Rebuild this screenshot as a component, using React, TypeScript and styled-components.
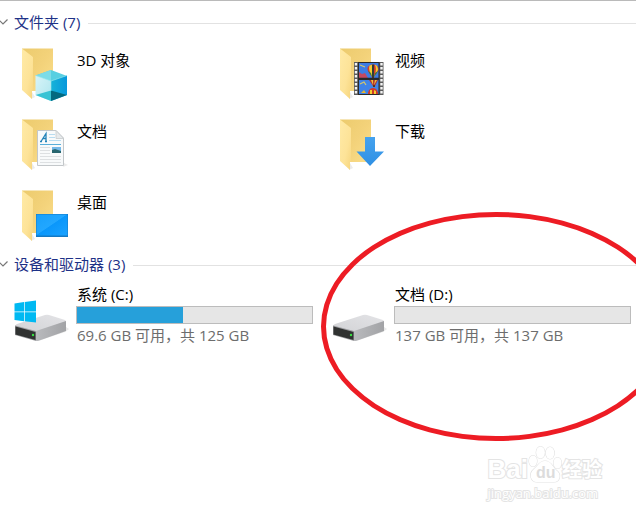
import React, { useState } from "react";
import styled, { createGlobalStyle } from "styled-components";

const GlobalStyle = createGlobalStyle`
  * { box-sizing: border-box; }
  body {
    margin: 0;
    background: #fff;
    font-family: "Open Sans", "Noto Sans CJK SC", sans-serif;
    font-size: 15px;
    line-height: 20px;
    color: #000;
  }
`;

const Page = styled.main`
  display: flex;
  flex-direction: column;
  min-height: 100vh;
  overflow: hidden;
  border-top: 1px solid #bababa;
  padding-top: 11px;
`;

const Group = styled.section`
  margin-bottom: 11px;
`;

const GroupHeader = styled.h2`
  display: flex;
  align-items: center;
  gap: 8px;
  margin: 0;
  font-size: 15px;
  font-weight: 400;

  &::after {
    content: "";
    flex: 1;
    height: 1px;
    background: #e2e2e2;
  }
`;

const Toggle = styled.button`
  display: flex;
  align-items: center;
  gap: 6px;
  padding: 0 0 2px;
  border: 0;
  background: none;
  color: #1e3287;
  font: inherit;
  line-height: 20px;
  cursor: pointer;
`;

const Chevron = styled.svg<{ $open: boolean }>`
  width: 8px;
  height: 8px;
  overflow: visible;
  transform: rotate(${(p) => (p.$open ? 0 : -90)}deg);
`;

const Tiles = styled.ul<{ $offset: number }>`
  display: grid;
  grid-template-columns: 1fr 1fr;
  gap: 17px 19px;
  margin: 0;
  padding: ${(p) => p.$offset}px 5px 0 14px;
  list-style: none;
`;

const Tile = styled.li<{ $drive?: boolean }>`
  position: relative;
  display: flex;
  align-items: ${(p) => (p.$drive ? "flex-end" : "flex-start")};
  gap: 8px;
`;

const Icon = styled.svg`
  flex: none;
  width: 54px;
  height: 54px;
  overflow: visible;
`;

const Name = styled.div<{ $inset?: boolean }>`
  padding: ${(p) => (p.$inset ? "3px 0 0 1px" : "0 0 0 1px")};
`;

const Details = styled.div`
  flex: 1;
  min-width: 0;
`;

const Capacity = styled.div`
  height: 18px;
  margin: 2px 0 1px;
  border: 1px solid #bcbcbc;
  background: #e6e6e6;
`;

const Used = styled.div`
  height: 100%;
  background: #26a0da;
`;

const Space = styled.div`
  padding: 0 0 1px 1px;
  color: #6d6d6d;
  white-space: nowrap;
`;

const Ring = styled.div`
  position: absolute;
  z-index: 1;
  left: -11px;
  top: -72px;
  width: 350px;
  height: 229px;
  border: 5px solid #ed1c24;
  border-radius: 50%;
  pointer-events: none;
`;

const Watermark = styled.footer`
  align-self: flex-end;
  margin-top: auto;
  padding: 0 34px 12px 0;
  color: #fff;
  -webkit-text-stroke: 2px #e4e4e4;
  paint-order: stroke fill;
`;

const Brand = styled.div`
  display: flex;
  align-items: flex-end;
  height: 38px;
  font: 700 26px/30px "Liberation Sans", "Noto Sans CJK SC", sans-serif;
`;

const Paw = styled.svg`
  width: 34px;
  height: 38px;
  overflow: visible;
`;

const PawText = styled.text`
  fill: #dcdcdc;
  font-size: 16px;
  -webkit-text-stroke: 0;
`;

const BrandCn = styled.span`
  font-size: 20px;
  line-height: 28px;
`;

const Site = styled.div`
  font: 13px/18px "Open Sans", sans-serif;
`;

const Folder = () => (
  <>
    <path d="M18 45 21 50 17 52Z" fill="#ddd" opacity=".6" />
    <path d="M8 1.5H39V44H16Z" fill="url(#folderBack)" />
    <path d="M8 1.5 19 10V43L18 44V52L8 43Z" fill="url(#folderFront)" />
  </>
);

const Defs = () => (
  <defs>
    <linearGradient id="folderBack" x1="0" y1="0" x2="1" y2="1">
      <stop offset="0" stopColor="#eccb6d" />
      <stop offset=".5" stopColor="#f3d27a" />
      <stop offset="1" stopColor="#fbdf8c" />
    </linearGradient>
    <linearGradient id="folderFront" x1="0" y1="0" x2="1" y2="1">
      <stop offset="0" stopColor="#ffeaa6" />
      <stop offset=".6" stopColor="#fde398" />
      <stop offset="1" stopColor="#f6d57e" />
    </linearGradient>
    <linearGradient id="cubeLeft" x1="0" y1="0" x2="1" y2="1">
      <stop offset="0" stopColor="#d8f4f8" />
      <stop offset="1" stopColor="#aee6ee" />
    </linearGradient>
    <linearGradient id="cubeRight" x1="0" y1="0" x2="1" y2="0">
      <stop offset="0" stopColor="#16b3d8" />
      <stop offset="1" stopColor="#0798dc" />
    </linearGradient>
    <linearGradient id="screen" x1="0" y1="0" x2="1" y2="1">
      <stop offset="0" stopColor="#18a0fb" />
      <stop offset=".48" stopColor="#22a7ff" />
      <stop offset=".5" stopColor="#0a97fb" />
      <stop offset="1" stopColor="#1ba2ff" />
    </linearGradient>
    <linearGradient id="arrow" x1="0" y1="0" x2="0" y2="1">
      <stop offset="0" stopColor="#45a2ee" />
      <stop offset="1" stopColor="#2f90e4" />
    </linearGradient>
    <linearGradient id="driveSide" x1="0" y1="0" x2="1" y2="0">
      <stop offset="0" stopColor="#b9babd" />
      <stop offset="1" stopColor="#a2a3a6" />
    </linearGradient>
    <linearGradient id="driveTop" x1="0" y1="1" x2="1" y2="0">
      <stop offset="0" stopColor="#d2d3d6" />
      <stop offset="1" stopColor="#e3e3e6" />
    </linearGradient>
  </defs>
);

const ObjectsIcon = () => (
  <Icon viewBox="0 0 54 54" aria-hidden="true">
    <Defs />
    <Folder />
    <path d="M37 23 53 29 37 35 21.5 28.5Z" fill="#57cfe1" />
    <path d="M37 23V35L21.5 28.5Z" fill="#7cdce8" />
    <path d="M21.5 28.5 37 34V54L21.5 48Z" fill="url(#cubeLeft)" />
    <path d="M37 34 53 28.5V48L37 54Z" fill="url(#cubeRight)" />
    <path d="M21.5 48 37 43.5V54Z" fill="#38c3d4" />
    <path d="M37 43.5 53 48 37 54Z" fill="#04697f" />
    <path d="M21.5 28.5 37 34 53 28.5M37 34V44" fill="none" stroke="#9be7ef" strokeWidth=".6" />
  </Icon>
);

const DocumentsIcon = () => (
  <Icon viewBox="0 0 54 54" aria-hidden="true">
    <Folder />
    <path d="M50 45 54 47 49 49Z" fill="#ddd" opacity=".6" />
    <path d="M23.5 12.5H42L49.5 20V47.5H23.5Z" fill="#f8fafb" stroke="#c3c7ca" />
    <path d="M42 12.5V20.5H49.5Z" fill="#e6e9eb" stroke="#c8ccce" strokeWidth=".8" />
    <path d="M26 23.5H28M31 23.5H33M27 23.5 32 15.5V23.5M29 20.5H32" fill="none" stroke="#2383b8" strokeWidth="1.3" />
    <path d="M35 16.5H41M35 19.5H41M35 22.5H47" stroke="#b9dcf0" />
    <path d="M26 26.5H47" stroke="#59aeda" />
    <path d="M26 29.5H36M26 32.5H36M26 35.5H36M26 38.5H47M26 41.5H47M26 44.5H47" stroke="#dde0e2" />
    <path d="M38 29H47V35H38Z" fill="#74b8e8" />
    <path d="M38 32 41 31 47 33V35H38Z" fill="#28666f" />
  </Icon>
);

const DesktopIcon = () => (
  <Icon viewBox="0 0 54 54" aria-hidden="true">
    <Folder />
    <path d="M22 25H54V48H22Z" fill="#1479c4" />
    <path d="M22.5 25.5H53.5V46.5H22.5Z" fill="url(#screen)" />
  </Icon>
);

const Balloon = ({ x, y }: { x: number; y: number }) => (
  <g transform={`translate(${x} ${y})`}>
    <path d="M-5.5 0C-5.5-6 5.5-6 5.5 0C5.5 3 2 6 1 8H-1C-2 6-5.5 3-5.5 0Z" fill="#d13a2b" />
    <path d="M-3.5-3.5C-5 1-2 5-1 8H0V-4.5ZM2-4.3C4 1 2 5 1 8L3 4 5 1C5-2 4-4 2-4.3Z" fill="#f3cd31" />
    <path d="M-1-4.5H1V8H-1Z" fill="#303c38" />
    <path d="M-5 2-2 4-1 8ZM5 2 2 4 1 8Z" fill="#30813f" />
    <path d="M-1 8H1V10H-1Z" fill="#613017" />
  </g>
);

const VideosIcon = () => (
  <Icon viewBox="0 0 54 54" aria-hidden="true">
    <Folder />
    <path d="M22 15H51.5V48H22Z" fill="#5c5c5c" />
    <path d="M26 15H47.5V48H26Z" fill="#2b2b2b" />
    <path d="M24 16V48M49.5 16V48" stroke="#f4f4f4" strokeWidth="2.4" strokeDasharray="2.5 1.5" />
    <path d="M27 16H46.5V31H27Z" fill="#3d7ce3" />
    <path d="M27 33H46.5V47H27Z" fill="#3f83e8" />
    <path d="M27 25 30 27 33 26 36 31H27Z" fill="#c44a60" />
    <path d="M28 18 33 20M28 37 32 35 34 38" fill="none" stroke="#d7c769" strokeWidth="1.2" />
    <path d="M29 46 32 43 34 46Z" fill="#e4b632" />
    <Balloon x={41} y={22} />
    <path d="M37 33H46L43 39H41Z" fill="#b53630" />
    <path d="M39 33H41V38ZM43 33H45L42 38Z" fill="#e9c33b" />
    <path d="M41 38H43V40H41Z" fill="#613017" />
    <path d="M36 47C36 39 46 39 46 47Z" fill="#d13a2b" />
    <path d="M38 47V43H40V47ZM42 47V43L44 44V47Z" fill="#f3cd31" />
    <path d="M27 31.5H47" stroke="#292929" strokeWidth="1.5" />
  </Icon>
);

const DownloadsIcon = () => (
  <Icon viewBox="0 0 54 54" aria-hidden="true">
    <Folder />
    <path d="M33 19H43V33.5H52L38 48 24.5 33.5H33Z" fill="url(#arrow)" />
  </Icon>
);

const DriveIcon = ({ system }: { system?: boolean }) => (
  <Icon viewBox="0 0 54 54" aria-hidden="true">
    <path d="M52 35 55 37 51 40 24 49Z" fill="#ccc" opacity=".45" />
    <path d="M1 34C1 33 2 33 3 32L31 23Q33 22.5 35 23L51 28Q52 28.5 52 30L22 40Z" fill="url(#driveTop)" />
    <path d="M22 39 52 29V39L24 49H22Z" fill="url(#driveSide)" />
    <path d="M1 33.5 22 39V49L1 43Z" fill="#9c9da0" />
    <path d="M1.5 34.5 21.5 40V48L1.5 42.5Z" fill="#303231" />
    <circle cx="19" cy="43" r="1.2" fill="#39df42" />
    {system && (
      <path
        d="M.5 11.5 10 10V19.5H.5ZM10.7 9.9 22 8.5V19.5H10.7ZM.5 20.2H10V29.2L.5 28ZM10.7 20.2H22V30.5L10.7 29.2Z"
        fill="#00b9f2"
      />
    )}
  </Icon>
);

const folders = [
  { name: "3D 对象", Picture: ObjectsIcon },
  { name: "视频", Picture: VideosIcon },
  { name: "文档", Picture: DocumentsIcon },
  { name: "下载", Picture: DownloadsIcon },
  { name: "桌面", Picture: DesktopIcon },
];

const drives = [
  { name: "系统 (C:)", space: "69.6 GB 可用，共 125 GB", used: 45, system: true, marked: false },
  { name: "文档 (D:)", space: "137 GB 可用，共 137 GB", used: 0, system: false, marked: true },
];

function Section({ title, offset, children }: { title: string; offset: number; children: React.ReactNode }) {
  const [open, setOpen] = useState(true);
  return (
    <Group>
      <GroupHeader>
        <Toggle type="button" aria-expanded={open} onClick={() => setOpen(!open)}>
          <Chevron $open={open} viewBox="0 0 8 8" aria-hidden="true">
            <path d="M-1 2 3 6 7.5 1.5" fill="none" stroke="#777" strokeWidth="1.2" />
          </Chevron>
          {title}
        </Toggle>
      </GroupHeader>
      {open && <Tiles $offset={offset}>{children}</Tiles>}
    </Group>
  );
}

export default function App() {
  return (
    <>
      <GlobalStyle />
      <Page>
        <Section title="文件夹 (7)" offset={13}>
          {folders.map(({ name, Picture }) => (
            <Tile key={name}>
              <Picture />
              <Name $inset>{name}</Name>
            </Tile>
          ))}
        </Section>
        <Section title="设备和驱动器 (3)" offset={8}>
          {drives.map((d) => (
            <Tile key={d.name} $drive>
              <DriveIcon system={d.system} />
              <Details>
                <Name>{d.name}</Name>
                <Capacity role="meter" aria-label={d.name} aria-valuemin={0} aria-valuemax={100} aria-valuenow={d.used}>
                  <Used style={{ width: `${d.used}%` }} />
                </Capacity>
                <Space>{d.space}</Space>
              </Details>
              {d.marked && <Ring />}
            </Tile>
          ))}
        </Section>
        <Watermark>
          <Brand>
            <span>Bai</span>
            <Paw viewBox="0 0 34 38" aria-hidden="true">
              <g fill="#fff" stroke="#e2e2e2" strokeWidth="1.2">
                <ellipse cx="5" cy="15" rx="4" ry="5.5" />
                <ellipse cx="12.5" cy="6.5" rx="4.3" ry="6" />
                <ellipse cx="22" cy="7" rx="4.3" ry="6" />
                <ellipse cx="29.5" cy="17" rx="4" ry="5.5" />
                <path d="M17 15C11 15 10 20 6 23C0 28 3 36 9 36H26C32 36 34 28 28 24C24 20 23 15 17 15Z" />
              </g>
              <PawText x="8" y="32">du</PawText>
            </Paw>
            <BrandCn>经验</BrandCn>
          </Brand>
          <Site>jingyan.baidu.com</Site>
        </Watermark>
      </Page>
    </>
  );
}
